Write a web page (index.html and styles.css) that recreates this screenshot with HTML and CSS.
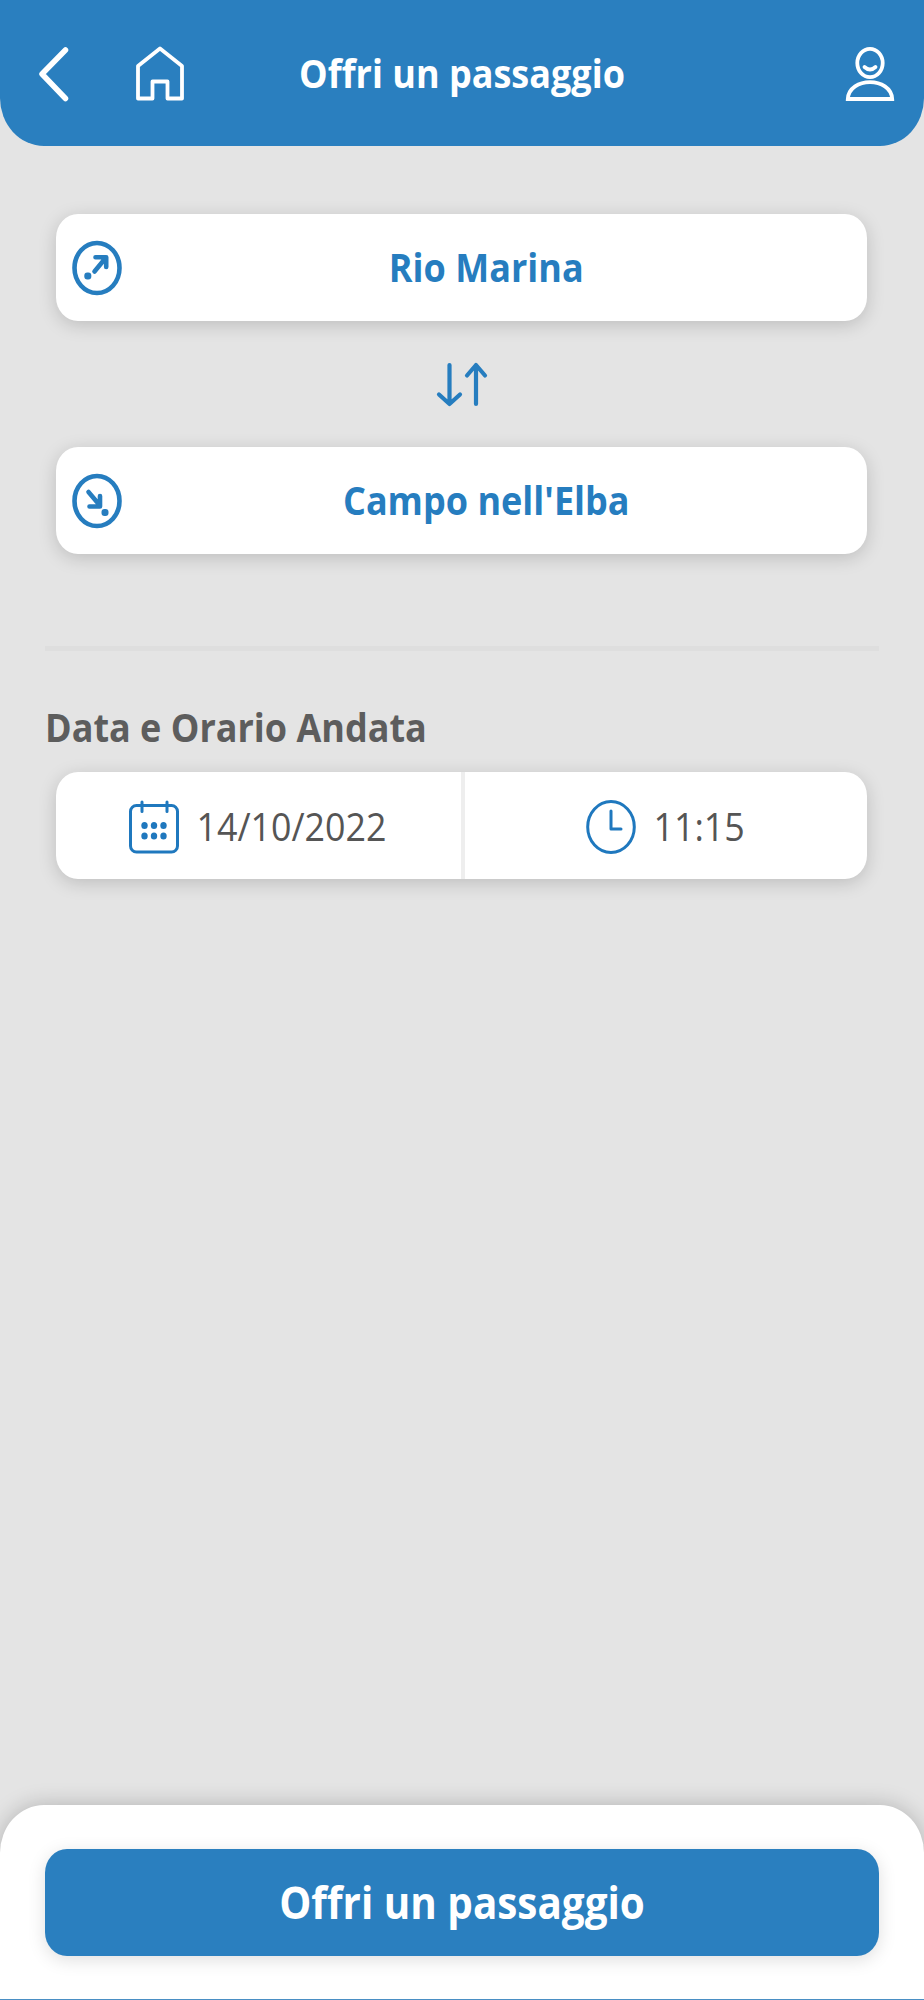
FILE: index.html
```html
<!DOCTYPE html>
<html lang="it">
<head>
<meta charset="utf-8">
<title>Offri un passaggio</title>
<link rel="stylesheet" href="styles.css">
</head>
<body>
<div class="screen">
  <header class="topbar">
    <svg class="back" width="32" height="58" viewBox="0 0 32 58"><path d="M28.500 5 5 29 28.500 53.500"/></svg>
    <svg class="home" width="50" height="56" viewBox="0 0 50 56"><path d="M3 20 25 2.500 47 20V52.500H32.500V35.500H17.500V52.500H3Z"/></svg>
    <h1 class="title"><span class="txt">Offri un passaggio</span></h1>
    <svg class="user" width="50" height="56" viewBox="0 0 50 56"><ellipse cx="25" cy="17" rx="12.700" ry="14.200"/><path d="M19.500 21Q25 26 30.500 21"/><path class="bust" d="M2.800 53C4 30.500 46 30.500 47.200 53Z"/></svg>
  </header>
  <main class="content">
    <button class="card place">
      <svg class="pin" width="50" height="56" viewBox="0 0 50 56"><ellipse cx="25" cy="28" rx="22.500" ry="25"/><path d="M22.500 31.500 34 17.500M23.500 17.200H34.200V27"/><rect class="dot" x="12.300" y="32.500" width="7" height="7" rx="3"/></svg>
      <span class="label"><span class="txt">Rio Marina</span></span>
    </button>
    <svg class="swap" width="52" height="46" viewBox="0 0 52 46"><path d="M13.500 3V42M3 32.500 13.500 42 24 32.500M40 42V3M31 13.500 40 3 49 13.500"/></svg>
    <button class="card place">
      <svg class="pin" width="50" height="56" viewBox="0 0 50 56"><ellipse cx="25" cy="28" rx="22.500" ry="25"/><path d="M16.500 19 27.500 32M28 23V33.500H17.500"/><rect class="dot" x="29.500" y="36" width="7" height="7" rx="3"/></svg>
      <span class="label"><span class="txt">Campo nell'Elba</span></span>
    </button>
    <hr class="rule">
    <h2 class="section"><span class="txt">Data e Orario Andata</span></h2>
    <div class="card when">
      <button class="cell date">
        <svg class="thin" width="50" height="56" viewBox="0 0 50 56"><rect x="1.500" y="6.500" width="47" height="46.500" rx="6"/><path d="M13 3V12.500M38 3V12.500"/><g class="dots"><ellipse cx="15.500" cy="26.500" rx="3.200" ry="3.600"/><ellipse cx="25" cy="26.500" rx="3.200" ry="3.600"/><ellipse cx="34.500" cy="26.500" rx="3.200" ry="3.600"/><ellipse cx="15.500" cy="37" rx="3.200" ry="3.600"/><ellipse cx="25" cy="37" rx="3.200" ry="3.600"/><ellipse cx="34.500" cy="37" rx="3.200" ry="3.600"/></g></svg>
        <span class="txt value">14/10/2022</span>
      </button>
      <button class="cell time">
        <svg class="thin" width="50" height="56" viewBox="0 0 50 56"><ellipse cx="25" cy="28" rx="23.300" ry="25.500"/><path d="M25 12V30H35"/></svg>
        <span class="txt value">11:15</span>
      </button>
    </div>
  </main>
  <footer class="footer">
    <button class="cta"><span class="txt">Offri un passaggio</span></button>
  </footer>
</div>
</body>
</html>
```

FILE: styles.css
```css
* { box-sizing: border-box; }
body { margin: 0; background: #e4e4e4; font-family: "Open Sans", "Noto Sans", sans-serif; }
button { border: 0; margin: 0; padding: 0; font: inherit; color: inherit; text-align: inherit; }
svg { display: block; flex: none; fill: none; stroke-linecap: round; stroke-linejoin: round; }

.screen { width: 924px; height: 2000px; display: flex; flex-direction: column; overflow: hidden; }
.txt { display: inline-block; white-space: nowrap; line-height: 50px; transform: scaleY(1.09); }

.topbar { height: 145.500px; flex: none; display: grid; grid-template-columns: 97px 50px 1fr 50px; align-items: center; padding: 2px 29px 0 37px; background: #2a7fbf; color: #fff; border-radius: 0 0 44px 44px / 0 0 48px 48px; }
.topbar svg { stroke: #fff; stroke-width: 3.800; }
.topbar .back { stroke-width: 5.500; }
.topbar .user .bust { stroke-linejoin: miter; }
.home { margin-left: 1px; }
.title { margin: 0 105px 0 0; text-align: center; font-size: 36px; font-weight: 700; }

.content { flex: 1; padding: 68px 45px 0; display: flex; flex-direction: column; }
.card { flex: none; height: 107px; margin: 0 12px 0 11px; background: #fff; border-radius: 22px / 24px; box-shadow: 0 4px 18px rgba(0, 0, 0, .17); display: flex; align-items: center; }
.place { padding-left: 15.500px; color: #267dbf; font-size: 36px; font-weight: 700; }
.pin { margin-top: 2px; stroke: #267dbf; stroke-width: 4.600; }
.pin .dot { fill: #267dbf; stroke: none; }
.label { flex: 1; text-align: center; padding: 2px 16px 0 0; }
.swap { align-self: center; margin: 41px 0 39px; stroke: #267dbf; stroke-width: 4.200; }
.rule { width: 100%; height: 5px; flex: none; margin: 92px 0 0; border: 0; background: #dedede; }
.section { margin: 52px 0 0; height: 69.500px; color: #5d5d5d; font-size: 36px; font-weight: 700; }
.when { align-items: stretch; color: #555; font-size: 35.800px; }
.cell { display: flex; align-items: center; padding-top: 2px; background: none; }
.date { width: 409px; padding-left: 72.500px; border-right: 4px solid #eee; }
.time { flex: 1; padding-left: 120.500px; }
.thin { stroke: #1f78be; stroke-width: 3; }
.dots { fill: #1f78be; stroke: none; }
.value { margin: 0 0 2px 18px; }

.footer { height: 195.500px; flex: none; padding: 44.500px 45px 0; background: #fff; border-radius: 44px 44px 0 0 / 48px 48px 0 0; border-bottom: 1px solid #4a8fc4; box-shadow: 0 0 22px rgba(0, 0, 0, .22); }
.cta { display: flex; align-items: center; justify-content: center; width: 100%; height: 107px; background: #2a7fbf; color: #fff; border-radius: 22px / 24px; box-shadow: 0 4px 18px rgba(0, 0, 0, .13); font-size: 40.400px; font-weight: 700; }
```
